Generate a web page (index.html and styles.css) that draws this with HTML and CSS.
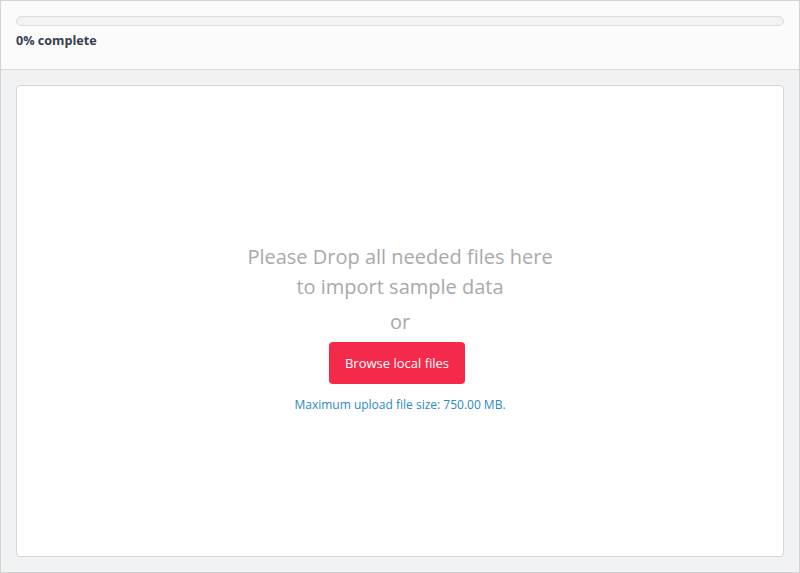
FILE: index.html
```html
<!DOCTYPE html>
<html>
<head>
<meta charset="utf-8">
<link rel="stylesheet" href="styles.css">
</head>
<body>
<div class="frame">
  <div class="top">
    <div class="progress"><div class="progress-fill" style="width:0%"></div></div>
    <div class="status">0% complete</div>
  </div>
  <div class="main">
    <div class="dropzone">
      <div class="msg">Please Drop all needed files here<br>to import sample data</div>
      <div class="or">or</div>
      <button class="browse">Browse local files</button>
      <div class="limit">Maximum upload file size: 750.00 MB.</div>
    </div>
  </div>
</div>
</body>
</html>
```

FILE: styles.css
```css
html, body {
  margin: 0;
  padding: 0;
  background: #ffffff;
}
body {
  font-family: "Open Sans", "Liberation Sans", sans-serif;
}
.frame {
  width: 800px;
  height: 573px;
  box-sizing: border-box;
  border: 1px solid #d2d2d2;
  display: flex;
  flex-direction: column;
  background: #f1f2f3;
}
.top {
  background: #fbfbfb;
  border-bottom: 1px solid #d9d9d9;
  padding: 15px 15px 0 15px;
  height: 69px;
  box-sizing: border-box;
}
.progress {
  height: 10px;
  box-sizing: border-box;
  border: 1px solid #dcdcdc;
  border-radius: 5px;
  background: #f3f3f3;
  overflow: hidden;
}
.progress-fill {
  height: 100%;
  background: #2a8ac4;
}
.status {
  margin-top: 7px;
  font-size: 12.6px;
  font-weight: 700;
  color: #34404f;
  line-height: 16px;
}
.main {
  flex: 1;
  padding: 15px 15px 15px 15px;
}
.dropzone {
  height: 472px;
  box-sizing: border-box;
  background: #ffffff;
  border: 1px solid #d6d6d6;
  border-radius: 4px;
  display: flex;
  flex-direction: column;
  align-items: center;
  text-align: center;
  padding-top: 156px;
}
.msg {
  font-size: 20px;
  line-height: 30px;
  color: #a9a9a9;
}
.or {
  font-size: 20px;
  line-height: 30px;
  color: #a9a9a9;
  margin-top: 5px;
}
.browse {
  margin-top: 5px;
  margin-right: 6px;
  width: 136px;
  height: 42px;
  border: none;
  border-radius: 4px;
  background: #f5294a;
  color: #ffffff;
  font-family: "Open Sans", "Liberation Sans", sans-serif;
  font-size: 13px;
  padding: 0;
}
.limit {
  margin-top: 13px;
  font-size: 12px;
  line-height: 16px;
  color: #2a8ac4;
}
```
